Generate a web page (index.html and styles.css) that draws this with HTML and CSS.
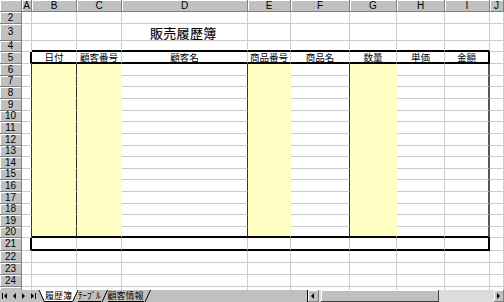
FILE: index.html
```html
<!DOCTYPE html>
<html lang="ja">
<head>
    <meta charset="UTF-8">
    <title>販売履歴簿</title>
    <link rel="stylesheet" href="styles.css">
</head>
<body>
    <div class="sheet">
        <div class="hd"></div><div class="hd">A</div><div class="hd">B</div><div class="hd">C</div><div class="hd">D</div><div class="hd">E</div><div class="hd">F</div><div class="hd">G</div><div class="hd">H</div><div class="hd">I</div><div class="hd">J</div>

        <div class="rh">2</div><div class="c"></div><div class="c"></div><div class="c"></div><div class="c"></div><div class="c"></div><div class="c"></div><div class="c"></div><div class="c"></div><div class="c"></div><div class="c"></div>
        <div class="rh">3</div><div class="c"></div><div class="c"></div><div class="c"></div><div class="c title">販売履歴簿</div><div class="c"></div><div class="c"></div><div class="c"></div><div class="c"></div><div class="c"></div><div class="c"></div>
        <div class="rh">4</div><div class="c"></div><div class="c tb"></div><div class="c tb"></div><div class="c tb"></div><div class="c tb"></div><div class="c tb"></div><div class="c tb"></div><div class="c tb"></div><div class="c tb"></div><div class="c"></div>
        <div class="rh">5</div><div class="c tr"></div><div class="c tb h">日付</div><div class="c tb h">顧客番号</div><div class="c tb h">顧客名</div><div class="c tb h">商品番号</div><div class="c tb h">商品名</div><div class="c tb h">数量</div><div class="c tb h">単価</div><div class="c tb tr h">金額</div><div class="c"></div>

        <div class="rh">6</div><div class="c dr"></div><div class="c y dr"></div><div class="c y"></div><div class="c dr"></div><div class="c y"></div><div class="c dr"></div><div class="c y"></div><div class="c"></div><div class="c er"></div><div class="c"></div>
        <div class="rh">7</div><div class="c dr"></div><div class="c y dr"></div><div class="c y"></div><div class="c dr"></div><div class="c y"></div><div class="c dr"></div><div class="c y"></div><div class="c"></div><div class="c er"></div><div class="c"></div>
        <div class="rh">8</div><div class="c dr"></div><div class="c y dr"></div><div class="c y"></div><div class="c dr"></div><div class="c y"></div><div class="c dr"></div><div class="c y"></div><div class="c"></div><div class="c er"></div><div class="c"></div>
        <div class="rh">9</div><div class="c dr"></div><div class="c y dr"></div><div class="c y"></div><div class="c dr"></div><div class="c y"></div><div class="c dr"></div><div class="c y"></div><div class="c"></div><div class="c er"></div><div class="c"></div>
        <div class="rh">10</div><div class="c dr"></div><div class="c y dr"></div><div class="c y"></div><div class="c dr"></div><div class="c y"></div><div class="c dr"></div><div class="c y"></div><div class="c"></div><div class="c er"></div><div class="c"></div>
        <div class="rh">11</div><div class="c dr"></div><div class="c y dr"></div><div class="c y"></div><div class="c dr"></div><div class="c y"></div><div class="c dr"></div><div class="c y"></div><div class="c"></div><div class="c er"></div><div class="c"></div>
        <div class="rh">12</div><div class="c dr"></div><div class="c y dr"></div><div class="c y"></div><div class="c dr"></div><div class="c y"></div><div class="c dr"></div><div class="c y"></div><div class="c"></div><div class="c er"></div><div class="c"></div>
        <div class="rh">13</div><div class="c dr"></div><div class="c y dr"></div><div class="c y"></div><div class="c dr"></div><div class="c y"></div><div class="c dr"></div><div class="c y"></div><div class="c"></div><div class="c er"></div><div class="c"></div>
        <div class="rh">14</div><div class="c dr"></div><div class="c y dr"></div><div class="c y"></div><div class="c dr"></div><div class="c y"></div><div class="c dr"></div><div class="c y"></div><div class="c"></div><div class="c er"></div><div class="c"></div>
        <div class="rh">15</div><div class="c dr"></div><div class="c y dr"></div><div class="c y"></div><div class="c dr"></div><div class="c y"></div><div class="c dr"></div><div class="c y"></div><div class="c"></div><div class="c er"></div><div class="c"></div>
        <div class="rh">16</div><div class="c dr"></div><div class="c y dr"></div><div class="c y"></div><div class="c dr"></div><div class="c y"></div><div class="c dr"></div><div class="c y"></div><div class="c"></div><div class="c er"></div><div class="c"></div>
        <div class="rh">17</div><div class="c dr"></div><div class="c y dr"></div><div class="c y"></div><div class="c dr"></div><div class="c y"></div><div class="c dr"></div><div class="c y"></div><div class="c"></div><div class="c er"></div><div class="c"></div>
        <div class="rh">18</div><div class="c dr"></div><div class="c y dr"></div><div class="c y"></div><div class="c dr"></div><div class="c y"></div><div class="c dr"></div><div class="c y"></div><div class="c"></div><div class="c er"></div><div class="c"></div>
        <div class="rh">19</div><div class="c dr"></div><div class="c y dr"></div><div class="c y"></div><div class="c dr"></div><div class="c y"></div><div class="c dr"></div><div class="c y"></div><div class="c"></div><div class="c er"></div><div class="c"></div>
        <div class="rh">20</div><div class="c dr"></div><div class="c y dr tb"></div><div class="c y tb"></div><div class="c dr tb"></div><div class="c y tb"></div><div class="c dr tb"></div><div class="c y tb"></div><div class="c tb"></div><div class="c er tb"></div><div class="c"></div>

        <div class="rh">21</div><div class="c tr"></div><div class="c tb"></div><div class="c tb"></div><div class="c tb"></div><div class="c tb"></div><div class="c tb"></div><div class="c tb"></div><div class="c tb"></div><div class="c tb tr"></div><div class="c"></div>
        <div class="rh">22</div><div class="c"></div><div class="c"></div><div class="c"></div><div class="c"></div><div class="c"></div><div class="c"></div><div class="c"></div><div class="c"></div><div class="c"></div><div class="c"></div>
        <div class="rh">23</div><div class="c"></div><div class="c"></div><div class="c"></div><div class="c"></div><div class="c"></div><div class="c"></div><div class="c"></div><div class="c"></div><div class="c"></div><div class="c"></div>
        <div class="rh">24</div><div class="c"></div><div class="c"></div><div class="c"></div><div class="c"></div><div class="c"></div><div class="c"></div><div class="c"></div><div class="c"></div><div class="c"></div><div class="c"></div>
        <div class="rh"></div><div class="c"></div><div class="c"></div><div class="c"></div><div class="c"></div><div class="c"></div><div class="c"></div><div class="c"></div><div class="c"></div><div class="c"></div><div class="c"></div>
    </div>

    <div class="tabbar">
        <svg class="nav" width="38" height="12" viewBox="0 0 38 12">
            <rect x="2" y="3" width="1" height="6" fill="#000"/>
            <path d="M7 3 L4 6 L7 9 Z" fill="#000"/>
            <path d="M16 3 L13 6 L16 9 Z" fill="#000"/>
            <path d="M22 3 L25 6 L22 9 Z" fill="#000"/>
            <path d="M31 3 L34 6 L31 9 Z" fill="#000"/>
            <rect x="35" y="3" width="1" height="6" fill="#000"/>
        </svg>
        <svg class="edge" width="7" height="12" viewBox="0 0 7 12">
            <path d="M1 0 L7 12 L7 0 Z" fill="#fff"/>
            <path d="M1 0 L6.5 12" stroke="#000" stroke-width="1" fill="none"/>
        </svg>
        <span class="tab active">履歴簿</span>
        <svg class="edge" width="6" height="12" viewBox="0 0 6 12">
            <path d="M0 0 L0 12 L0.5 12 L6 0 Z" fill="#fff"/>
            <path d="M0.5 12 L6 0" stroke="#000" stroke-width="1" fill="none"/>
        </svg>
        <span class="tab">ﾃｰﾌﾞﾙ</span>
        <svg class="edge" width="7" height="12" viewBox="0 0 7 12">
            <path d="M1 12 L6.5 0" stroke="#000" stroke-width="1" fill="none"/>
        </svg>
        <span class="tab">顧客情報</span>
        <svg class="edge" width="7" height="12" viewBox="0 0 7 12">
            <path d="M1 12 L6.5 0" stroke="#000" stroke-width="1" fill="none"/>
        </svg>

        <div class="hscroll">
            <div class="split"></div>
            <div class="btn">
                <svg width="10" height="12" viewBox="0 0 10 12"><path d="M6 3 L3 6 L6 9 Z" fill="#000"/></svg>
            </div>
            <div class="track">
                <div class="thumb"></div>
            </div>
            <div class="btn">
                <svg width="9" height="12" viewBox="0 0 9 12"><path d="M3 3 L6 6 L3 9 Z" fill="#000"/></svg>
            </div>
        </div>
    </div>
</body>
</html>
```

FILE: styles.css
```css
:root {
    --face: #c0c0c0;
    --shadow: #808080;
    --grid: #cccccc;
    --note: #ffffc4;
}
body {
    margin: 0;
    width: 504px;
    height: 302px;
    overflow: hidden;
    background: #fff;
    font-family: "Liberation Sans", "Noto Sans CJK JP", sans-serif;
    color: #000;
}
.sheet {
    display: grid;
    grid-template-columns: 22px 10px 45px 45px 126px 43px 59px 47px 48px 45px 14px;
    grid-template-rows: 12px 12px 17px 11px 12px
        12px 11px 12px 12px 11px 12px 12px 11px 12px 11px 12px 12px 11px 12px 11px
        13px 12px 12px 12px 12px;
    height: 290px;
    overflow: hidden;
}
.hd,
.rh {
    display: flex;
    align-items: center;
    justify-content: center;
    box-sizing: border-box;
    background: var(--face);
    border-right: 1px solid var(--shadow);
    border-bottom: 1px solid var(--shadow);
    box-shadow: inset 1px 1px #fff;
    font-size: 10px;
    line-height: 10px;
}
.c {
    box-sizing: border-box;
    border-right: 1px solid var(--grid);
    border-bottom: 1px solid var(--grid);
    min-width: 0;
}
.y {
    background: var(--note);
    border-right-color: var(--note);
    border-bottom-color: var(--note);
}
.dr {
    border-right-color: #333;
}
.er {
    border-right: 2px solid #555;
}
.tb {
    border-bottom: 2px solid #000;
}
.tr {
    border-right: 2px solid #000;
}
.h {
    font-family: "Noto Sans CJK JP", sans-serif;
    font-size: 9.5px;
    line-height: 10px;
    text-align: center;
    white-space: nowrap;
}
.title {
    padding-left: 28px;
    font-family: "Noto Sans CJK JP", sans-serif;
    font-size: 13px;
    letter-spacing: 0.3px;
    line-height: 17px;
    white-space: nowrap;
    -webkit-text-stroke: 0.15px #000;
}
.tabbar {
    display: flex;
    height: 12px;
    background: var(--face);
    font-family: "Noto Sans CJK JP", sans-serif;
    font-size: 9px;
    line-height: 12px;
}
.nav,
.edge {
    flex: none;
    display: block;
}
.tab {
    box-sizing: border-box;
    border-bottom: 1px solid #000;
    white-space: nowrap;
}
.tab.active {
    background: #fff;
}
.hscroll {
    margin-left: auto;
    width: 197px;
    display: flex;
}
.split {
    width: 1px;
    background: #000;
}
.btn {
    box-sizing: border-box;
    background: var(--face);
    border-right: 1px solid var(--shadow);
    border-bottom: 1px solid var(--shadow);
    box-shadow: inset 1px 1px #fff;
}
.btn svg {
    display: block;
}
.track {
    flex: 1;
    padding-left: 2px;
    background: #dcdcdc;
}
.thumb {
    box-sizing: border-box;
    width: 118px;
    height: 12px;
    background: var(--face);
    border-right: 1px solid #404040;
    border-bottom: 1px solid #404040;
    box-shadow: inset 1px 1px #fff;
}
```
